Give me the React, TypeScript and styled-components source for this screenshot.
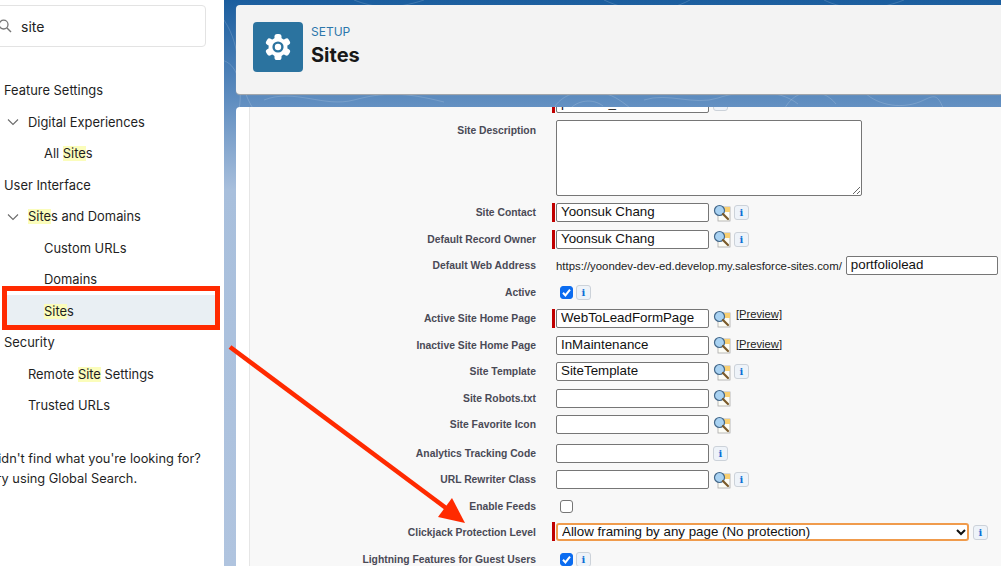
import styled, { createGlobalStyle } from "styled-components";

const GlobalStyle = createGlobalStyle`
  html, body {
    margin: 0;
    height: 100%;
    overflow: hidden;
    background: #fff;
    font-family: "Inter", "Liberation Sans", sans-serif;
  }
  * { box-sizing: border-box; }
`;

const Page = styled.div`
  position: relative;
  display: flex;
  width: 1001px;
  height: 566px;
  overflow: hidden;
`;

/* ---- left tree ---- */

const Sidebar = styled.aside`
  flex: 0 0 224px;
  padding-top: 5px;
  background: #fff;
  color: #1f1f1f;
  font-size: 12.9px;
`;

const SearchBox = styled.div`
  display: flex;
  align-items: center;
  gap: 9px;
  width: 214px;
  height: 42px;
  margin: 0 0 27.8px -8px;
  padding-left: 5px;
  border: 1px solid #e3e3e3;
  border-radius: 4px;
  font-size: 14px;
  color: #222;
`;

const SearchIcon = styled.svg`
  flex: none;
  width: 14px;
  height: 14px;
`;

const TreeRow = styled.div<{ $indent: number; $selected?: boolean }>`
  display: flex;
  align-items: center;
  height: 31.5px;
  margin: ${(p) => (p.$selected ? "0 8px 0 4px" : "0")};
  padding-left: ${(p) => (p.$selected ? p.$indent - 4 : p.$indent)}px;
  background: ${(p) => (p.$selected ? "#e9eff3" : "transparent")};
`;

const Chevron = styled.svg`
  width: 12px;
  height: 12px;
  margin: 0 9px 0 -21px;
`;

const Mark = styled.span`
  background: #fbfdbb;
`;

const NotFound = styled.p`
  margin: 28px 0 0 -11px;
  line-height: 19.5px;
  font-size: 12.8px;
  white-space: nowrap;
`;

/* ---- right side ---- */

const Main = styled.main`
  position: relative;
  flex: 1;
  padding: 5px 0 0 12px;
  background: linear-gradient(#1a5d9e 0, #5f8dc0 100px, #a8bfdc 190px, #b0c4df 100%);
  overflow: hidden;
`;

const Contours = styled.svg`
  position: absolute;
  left: 0;
  top: 0;
  width: 100%;
  height: 110px;
  fill: none;
  stroke: #ffffff;
  stroke-opacity: 0.16;
  stroke-width: 1;
`;

const HeaderCard = styled.header`
  position: relative;
  display: flex;
  align-items: flex-start;
  gap: 8px;
  height: 89px;
  padding: 17px;
  background: #f3f3f3;
  border-radius: 4px 0 0 4px;
  box-shadow: 0 1px 1px #a9a9a9;
`;

const IconTile = styled.div`
  display: flex;
  align-items: center;
  justify-content: center;
  width: 50px;
  height: 50px;
  border-radius: 4px;
  background: #2b739f;
`;

const Titles = styled.div`
  padding-top: 3px;
`;

const Eyebrow = styled.div`
  font-size: 12px;
  line-height: 14px;
  color: #2b76ab;
`;

const Title = styled.h1`
  margin: 3px 0 0;
  font-size: 20px;
  line-height: 26px;
  font-weight: 700;
  color: #181818;
`;

const ContentCard = styled.section`
  position: relative;
  height: 480px;
  margin-top: 13px;
  padding-left: 13px;
  background: #fff;
  border-radius: 4px 0 0 0;
  overflow: hidden;
`;

const Form = styled.div`
  height: 100%;
  padding-top: 1px;
  background: #f8f8f8;
  border-left: 1px solid #e6e6e6;
  font-family: "Liberation Sans", Arial, sans-serif;
`;

const Rows = styled.div`
  margin-top: -17.6px;
`;

const Row = styled.div<{ $height?: number; $top?: boolean; $gapTop?: number }>`
  display: flex;
  align-items: ${(p) => (p.$top ? "flex-start" : "center")};
  height: ${(p) => p.$height ?? 26.5}px;
  margin-top: ${(p) => p.$gapTop ?? 0}px;
  padding-top: ${(p) => (p.$top ? 3.5 : 0)}px;
`;

const Label = styled.div<{ $top?: boolean }>`
  flex: 0 0 286px;
  margin-top: ${(p) => (p.$top ? 5 : 0)}px;
  text-align: right;
  font-size: 10.35px;
  font-weight: 700;
  color: #4a4a56;
  white-space: nowrap;
`;

const Field = styled.div`
  display: flex;
  align-items: center;
  flex: 1;
  min-width: 0;
  padding-left: 20px;
`;

const Required = styled.span<{ $on?: boolean; $raised?: boolean }>`
  flex: none;
  width: 3px;
  height: 19px;
  margin-left: -4px;
  margin-right: 1px;
  margin-top: ${(p) => (p.$raised ? -2 : 0)}px;
  background: ${(p) => (p.$on ? "#c00000" : "transparent")};
`;

const TextInput = styled.input<{ $width?: number }>`
  flex: none;
  width: ${(p) => p.$width ?? 153}px;
  height: 19px;
  padding: 0 4px 2px;
  background: #fff;
  border: 1px solid #767676;
  border-radius: 2px;
  font: 13.33px "Liberation Sans", Arial, sans-serif;
  color: #111;
  outline: none;
`;

const Area = styled.textarea`
  display: block;
  width: 306px;
  height: 76px;
  padding: 2px;
  background: #fff;
  border: 1px solid #767676;
  border-radius: 2px;
  resize: vertical;
  outline: none;
`;

const UrlPrefix = styled.span`
  margin-right: 4px;
  font-size: 11.36px;
  color: #222;
  white-space: nowrap;
`;

const Lookup = styled.svg`
  flex: none;
  width: 18px;
  height: 18px;
  margin-left: 4px;
`;

const InfoButton = styled.span<{ $near?: boolean }>`
  flex: none;
  display: flex;
  align-items: center;
  justify-content: center;
  width: 15px;
  height: 15px;
  margin-left: ${(p) => (p.$near ? 4 : 3)}px;
  border: 1px solid #ccd2d9;
  border-radius: 3px;
  background: #eef3f9;
  font: 700 10px "DejaVu Serif", serif;
  color: #0b6fd6;
`;

const Check = styled.span<{ $on?: boolean }>`
  flex: none;
  display: flex;
  align-items: center;
  justify-content: center;
  width: 13px;
  height: 13px;
  margin-left: 4px;
  border-radius: 3px;
  background: ${(p) => (p.$on ? "#0b6cf0" : "#fff")};
  border: 1px solid ${(p) => (p.$on ? "#0b6cf0" : "#767676")};
`;

const PreviewLink = styled.a<{ $lift: number }>`
  margin: ${(p) => -p.$lift}px 0 0 5px;
  font-size: 11.2px;
  color: #222;
  text-decoration: underline;
  white-space: nowrap;
`;

const Select = styled.select`
  flex: none;
  width: 413px;
  height: 18px;
  margin-top: -2px;
  padding: 0 0 0 2px;
  background: #fff;
  border: none;
  box-shadow: inset 0 0 0 2px #f09b4c;
  border-radius: 3px;
  font: 13.33px "Liberation Sans", Arial, sans-serif;
  color: #111;
  outline: none;
`;

/* ---- annotations painted over the screenshot ---- */

const RedBox = styled.div`
  position: absolute;
  left: 2px;
  top: 286px;
  width: 218px;
  height: 44px;
  border: 5px solid #ff2a00;
`;

const Arrow = styled.svg`
  position: absolute;
  left: 225px;
  top: 340px;
  width: 250px;
  height: 190px;
`;

function LookupIcon() {
  return (
    <Lookup viewBox="0 0 18 18">
      <rect x="5" y="3" width="12" height="14" fill="#fdfdf6" stroke="#a9a9a9" strokeWidth="0.8" />
      <rect x="11" y="3" width="6" height="5" fill="#f8cf72" />
      <circle cx="6.5" cy="6.5" r="5" fill="#a9d2f2" stroke="#44688a" strokeWidth="1.2" />
      <path d="M10 10l5 5" stroke="#7a5a2a" strokeWidth="2.2" strokeLinecap="round" />
    </Lookup>
  );
}

function Info({ near }: { near?: boolean }) {
  return <InfoButton $near={near}>i</InfoButton>;
}

function Tick({ on }: { on?: boolean }) {
  return (
    <Check $on={on}>
      {on && (
        <svg width="11" height="11" viewBox="0 0 11 11">
          <path d="M2 5.8l2.4 2.6L9 2.6" fill="none" stroke="#fff" strokeWidth="2" />
        </svg>
      )}
    </Check>
  );
}

function Gear() {
  const teeth = [0, 60, 120, 180, 240, 300];
  return (
    <svg width="28" height="28" viewBox="0 0 28 28">
      <circle cx="14" cy="14" r="9.5" fill="#fff" />
      {teeth.map((a) => (
        <rect key={a} x="10.5" y="1" width="7" height="8" rx="2.6" fill="#fff" transform={`rotate(${a} 14 14)`} />
      ))}
      <circle cx="14" cy="14" r="5.6" fill="#2b739f" />
      <circle cx="14" cy="14" r="3.2" fill="#fff" />
    </svg>
  );
}

function TreeChevron() {
  return (
    <Chevron viewBox="0 0 12 12">
      <path d="M1 3.5l5 5 5-5" fill="none" stroke="#6b6b6b" strokeWidth="1.1" />
    </Chevron>
  );
}

function App() {
  return (
    <Page>
      <GlobalStyle />
      <Sidebar>
        <SearchBox>
          <SearchIcon viewBox="0 0 14 14">
            <circle cx="5.6" cy="5.6" r="4.4" fill="none" stroke="#777" strokeWidth="1.3" />
            <path d="M9 9l4 4" stroke="#777" strokeWidth="1.4" />
          </SearchIcon>
          site
        </SearchBox>
        <TreeRow $indent={4}>Feature Settings</TreeRow>
        <TreeRow $indent={28}>
          <TreeChevron />
          Digital Experiences
        </TreeRow>
        <TreeRow $indent={44}>
          All&nbsp;<Mark>Site</Mark>s
        </TreeRow>
        <TreeRow $indent={4}>User Interface</TreeRow>
        <TreeRow $indent={28}>
          <TreeChevron />
          <Mark>Site</Mark>s and Domains
        </TreeRow>
        <TreeRow $indent={44}>Custom URLs</TreeRow>
        <TreeRow $indent={44}>Domains</TreeRow>
        <TreeRow $indent={44} $selected>
          <Mark>Site</Mark>s
        </TreeRow>
        <TreeRow $indent={4}>Security</TreeRow>
        <TreeRow $indent={28}>
          Remote&nbsp;<Mark>Site</Mark>&nbsp;Settings
        </TreeRow>
        <TreeRow $indent={28}>Trusted URLs</TreeRow>
        <NotFound>
          Didn't find what you're looking for?
          <br />
          Try using Global Search.
        </NotFound>
      </Sidebar>

      <Main>
        <Contours viewBox="0 0 777 110" preserveAspectRatio="none">
          <path d="M0 20c20 30 10 60 30 90M-5 60c15 0 25 20 20 50" />
          <path d="M40 100c30-12 60 8 90 0s50-8 90 2" />
          <path d="M330 108c10-18 40-22 62-10 10 6 14 10 18 14M345 110c8-10 24-12 34-4" />
          <path d="M420 100c24-8 50 6 74-2s60-10 80 6" />
          <path d="M560 110c10-22 38-24 52-6M640 92c14 14 40 18 60 8 12-6 14-4 20 10" />
          <path d="M130 0c20 8 40 10 70 0M380 0c30 14 60 14 86 0M600 0c20 10 50 12 80 0" />
        </Contours>
        <HeaderCard>
          <IconTile>
            <Gear />
          </IconTile>
          <Titles>
            <Eyebrow>SETUP</Eyebrow>
            <Title>Sites</Title>
          </Titles>
        </HeaderCard>

        <ContentCard>
          <Form>
            <Rows>
              <Row>
                <Label />
                <Field>
                  <Required $on />
                  <TextInput readOnly defaultValue="portfolio_lead" />
                  <Info near />
                </Field>
              </Row>
              <Row $height={82.4} $top>
                <Label $top>Site Description</Label>
                <Field>
                  <Area readOnly />
                </Field>
              </Row>
              <Row>
                <Label>Site Contact</Label>
                <Field>
                  <Required $on />
                  <TextInput readOnly defaultValue="Yoonsuk Chang" />
                  <LookupIcon />
                  <Info />
                </Field>
              </Row>
              <Row>
                <Label>Default Record Owner</Label>
                <Field>
                  <Required $on />
                  <TextInput readOnly defaultValue="Yoonsuk Chang" />
                  <LookupIcon />
                  <Info />
                </Field>
              </Row>
              <Row>
                <Label>Default Web Address</Label>
                <Field>
                  <UrlPrefix>https://yoondev-dev-ed.develop.my.salesforce-sites.com/</UrlPrefix>
                  <TextInput $width={152} readOnly defaultValue="portfoliolead" />
                </Field>
              </Row>
              <Row>
                <Label>Active</Label>
                <Field>
                  <Tick on />
                  <Info />
                </Field>
              </Row>
              <Row>
                <Label>Active Site Home Page</Label>
                <Field>
                  <Required $on />
                  <TextInput readOnly defaultValue="WebToLeadFormPage" />
                  <LookupIcon />
                  <PreviewLink $lift={9}>[Preview]</PreviewLink>
                </Field>
              </Row>
              <Row>
                <Label>Inactive Site Home Page</Label>
                <Field>
                  <Required />
                  <TextInput readOnly defaultValue="InMaintenance" />
                  <LookupIcon />
                  <PreviewLink $lift={3}>[Preview]</PreviewLink>
                </Field>
              </Row>
              <Row>
                <Label>Site Template</Label>
                <Field>
                  <Required />
                  <TextInput readOnly defaultValue="SiteTemplate" />
                  <LookupIcon />
                  <Info />
                </Field>
              </Row>
              <Row>
                <Label>Site Robots.txt</Label>
                <Field>
                  <Required />
                  <TextInput readOnly />
                  <LookupIcon />
                </Field>
              </Row>
              <Row>
                <Label>Site Favorite Icon</Label>
                <Field>
                  <Required />
                  <TextInput readOnly />
                  <LookupIcon />
                </Field>
              </Row>
              <Row $gapTop={2}>
                <Label>Analytics Tracking Code</Label>
                <Field>
                  <Required />
                  <TextInput readOnly />
                  <Info near />
                </Field>
              </Row>
              <Row>
                <Label>URL Rewriter Class</Label>
                <Field>
                  <Required />
                  <TextInput readOnly />
                  <LookupIcon />
                  <Info />
                </Field>
              </Row>
              <Row>
                <Label>Enable Feeds</Label>
                <Field>
                  <Tick />
                </Field>
              </Row>
              <Row>
                <Label>Clickjack Protection Level</Label>
                <Field>
                  <Required $on $raised />
                  <Select defaultValue="any">
                    <option value="any">Allow framing by any page (No protection)</option>
                  </Select>
                  <Info near />
                </Field>
              </Row>
              <Row>
                <Label>Lightning Features for Guest Users</Label>
                <Field>
                  <Tick on />
                  <Info />
                </Field>
              </Row>
            </Rows>
          </Form>
        </ContentCard>
      </Main>

      <RedBox />
      <Arrow viewBox="0 0 250 190">
        <line x1="5" y1="7" x2="221" y2="168" stroke="#ff2a00" strokeWidth="4.6" />
        <polygon points="240,183 213,177 227,158" fill="#ff2a00" />
      </Arrow>
    </Page>
  );
}

export default App;
